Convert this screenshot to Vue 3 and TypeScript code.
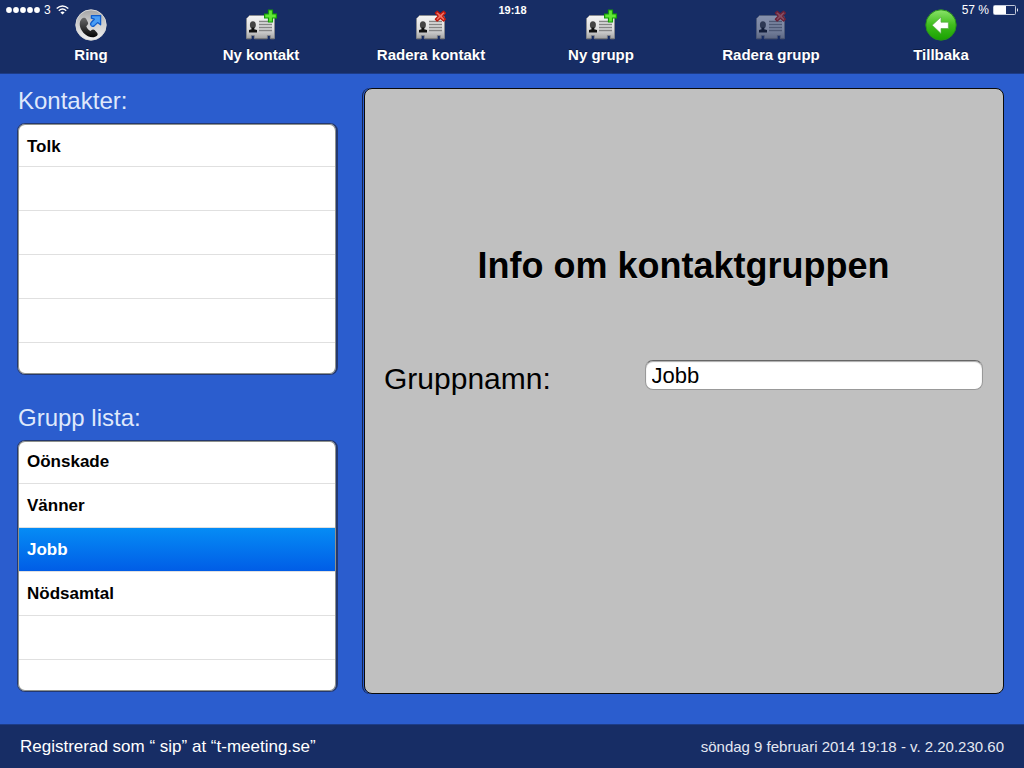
<script setup lang="ts">
import { ref } from 'vue'

type IconKind = 'call' | 'add' | 'remove' | 'back'

interface Action {
  label: string
  icon: IconKind
  disabled?: boolean
}

const actions: Action[] = [
  { label: 'Ring', icon: 'call' },
  { label: 'Ny kontakt', icon: 'add' },
  { label: 'Radera kontakt', icon: 'remove' },
  { label: 'Ny grupp', icon: 'add' },
  { label: 'Radera grupp', icon: 'remove', disabled: true },
  { label: 'Tillbaka', icon: 'back' },
]

const contacts: string[] = ['Tolk', '', '', '', '', '']
const groups: string[] = ['Oönskade', 'Vänner', 'Jobb', 'Nödsamtal', '', '']

const selected = ref('Jobb')
const groupName = ref('Jobb')

function selectGroup(name: string): void {
  selected.value = name
  groupName.value = name
}
</script>

<template>
  <div class="app">
    <svg class="defs" width="0" height="0" aria-hidden="true">
      <defs>
        <linearGradient id="silver" x1="0" y1="0" x2="0" y2="1">
          <stop offset="0" stop-color="#f4f4f4" />
          <stop offset="0.6" stop-color="#dcdcdc" />
          <stop offset="1" stop-color="#a2a2a2" />
        </linearGradient>
        <linearGradient id="ball" x1="0" y1="0" x2="0" y2="1">
          <stop offset="0" stop-color="#a4a4a4" />
          <stop offset="0.4" stop-color="#cacaca" />
          <stop offset="1" stop-color="#f0f0f0" />
        </linearGradient>
        <linearGradient id="handset" x1="0" y1="0" x2="0" y2="1">
          <stop offset="0" stop-color="#6a6a6a" />
          <stop offset="1" stop-color="#050505" />
        </linearGradient>
        <linearGradient id="green" x1="0" y1="0" x2="0" y2="1">
          <stop offset="0" stop-color="#8be36a" />
          <stop offset="0.5" stop-color="#3fbd1c" />
          <stop offset="1" stop-color="#18a000" />
        </linearGradient>
      </defs>
    </svg>

    <header class="topbar">
      <div class="status">
        <div class="status-side">
          <svg width="36" height="8" viewBox="0 0 36 8" fill="#fff" aria-hidden="true">
            <circle v-for="n in 5" :key="n" :cx="n * 7 - 4" cy="4" r="2.9" />
          </svg>
          <span>3</span>
          <svg width="13" height="10" viewBox="0 0 13 10" fill="none" stroke="#fff" stroke-width="1.4" aria-hidden="true">
            <path d="M0.7 3.6Q6.5 -1.8 12.3 3.6M2.8 5.8Q6.5 2.4 10.2 5.8" />
            <path d="M4.4 7.4Q6.5 5.6 8.6 7.4L6.5 9.6Z" fill="#fff" stroke="none" />
          </svg>
        </div>
        <time class="clock">19:18</time>
        <div class="status-side status-right">
          <span>57 %</span>
          <svg width="26" height="10" viewBox="0 0 26 10" aria-hidden="true">
            <rect x="0.5" y="0.5" width="22" height="9" rx="1" fill="none" stroke="#c3cada" />
            <rect x="1" y="1" width="12" height="8" fill="#fff" />
            <path d="M24 3Q26 5 24 7Z" fill="#fff" />
          </svg>
        </div>
      </div>

      <nav class="actions">
        <button v-for="a in actions" :key="a.label" type="button" class="action" :disabled="a.disabled">
          <svg class="icon" viewBox="0 0 32 32" aria-hidden="true">
            <g v-if="a.icon === 'call'">
              <circle cx="16" cy="16" r="15.2" fill="url(#ball)" stroke="#d8d8d8" />
              <path
                d="M7 9.6C3.2 13 4.4 19.6 8.6 23.9C12.8 28.2 19 29.6 22.2 26.4Q23.2 25.3 22.3 24L19.6 21Q18.4 19.9 17 20.8L15.4 21.9C13 20.6 11.9 19 11.3 17.2L12.6 15.8Q13.6 14.6 12.9 13.2L11.2 9.9Q10.3 8.4 8.8 8.7Q7.8 8.9 7 9.6Z"
                fill="url(#handset)"
              />
              <path
                d="M16.4 6.6H25.6V15.8L22.6 13.6L19.2 16.9Q17.6 18 16.2 16.6Q14.8 15 16.2 13.5L19.3 10.2L16.4 9.2Z"
                fill="#4a9ef6"
                stroke="#0f5ccb"
                stroke-width="1.3"
                stroke-linejoin="round"
              />
            </g>
            <g v-else-if="a.icon === 'back'">
              <circle cx="16" cy="16" r="15.2" fill="url(#green)" stroke="#28901b" />
              <path
                d="M7.2 16.2L16 8.1V13.2H23.4V19.5H16V24.5Z"
                fill="#fff"
                stroke="#5aa94a"
                stroke-width="0.7"
                stroke-linejoin="round"
              />
            </g>
            <g v-else>
              <path
                d="M4.5 6.5H27Q29.5 6.5 29.5 9V29.5H25.3V26.5H22.3V29.5H9.3V26.5H6.3V29.5H1.5V9.5Z"
                fill="url(#silver)"
                stroke="#8c8c8c"
                stroke-width="0.8"
              />
              <path d="M1.6 29.8H6.1M9.4 29.8H22.2M25.4 29.8H29.4" stroke="#777" />
              <ellipse cx="7.9" cy="16" rx="3" ry="3.7" fill="#444" />
              <path d="M6.6 18.5H9.2V20.2L12 21V23.4H4V21L6.6 20.2Z" fill="#111" />
              <path d="M14 12.5H27M14 15.5H27M14 18.5H27M14 21.5H27" stroke="#858585" stroke-width="1.3" />
              <path
                v-if="a.icon === 'add'"
                d="M23.5 1H27.5V5H31.4V9H27.5V13H23.5V9H19.6V5H23.5Z"
                fill="#62e636"
                stroke="#159b08"
                stroke-width="1.2"
              />
              <path
                v-else
                d="M22.2 2.2L25.4 5L28.6 2.2L30.4 4L27.6 7.1L30.4 10.2L28.6 12L25.4 9.2L22.2 12L20.4 10.2L23.2 7.1L20.4 4Z"
                fill="#f27262"
                stroke="#bd160c"
                stroke-width="1.3"
                stroke-linejoin="round"
              />
            </g>
          </svg>
          <span>{{ a.label }}</span>
        </button>
      </nav>
    </header>

    <main class="main">
      <div class="lists">
        <section class="section">
          <h2 class="section-title">Kontakter:</h2>
          <ul class="list contacts">
            <li v-for="(name, i) in contacts" :key="i" class="row">
              <button v-if="name" type="button" class="row-button">{{ name }}</button>
            </li>
          </ul>
        </section>
        <section class="section">
          <h2 class="section-title">Grupp lista:</h2>
          <ul class="list">
            <li v-for="(name, i) in groups" :key="i" class="row" :class="{ selected: name === selected }">
              <button v-if="name" type="button" class="row-button" @click="selectGroup(name)">{{ name }}</button>
            </li>
          </ul>
        </section>
      </div>

      <section class="panel">
        <h1 class="panel-title">Info om kontaktgruppen</h1>
        <div class="field">
          <label for="group-name">Gruppnamn:</label>
          <input id="group-name" v-model="groupName" type="text" />
        </div>
      </section>
    </main>

    <footer class="footer">
      <span class="registered">Registrerad som “ sip” at “t-meeting.se”</span>
      <span class="version">söndag 9 februari 2014 19:18 - v. 2.20.230.60</span>
    </footer>
  </div>
</template>

<style>
body {
  background: #2b5dce;
}
</style>

<style scoped>
.app {
  display: flex;
  flex-direction: column;
  min-height: 100vh;
  font-family: "Liberation Sans", Arial, sans-serif;
  color: #000;
  background: #2b5dce;
}

.app *,
.app {
  box-sizing: border-box;
}

.defs {
  position: absolute;
}

button {
  font: inherit;
  color: inherit;
  background: none;
  border: 0;
  padding: 0;
  margin: 0;
}

.topbar {
  position: relative;
  background: #172d65;
  border-bottom: 1px solid #1d3c87;
  color: #fff;
}

.status {
  position: absolute;
  top: 0;
  left: 0;
  right: 0;
  display: flex;
  align-items: center;
  height: 20px;
  padding: 0 5px 0 6px;
  font-size: 12px;
  line-height: 20px;
  pointer-events: none;
}

.status-side {
  display: flex;
  flex: 1;
  align-items: center;
  gap: 2px;
}

.status-side span {
  margin: 0 3px 0 0;
}

.status-right {
  justify-content: flex-end;
  gap: 1px;
}

.clock {
  font-size: 11px;
  font-weight: bold;
}

.actions {
  display: flex;
  justify-content: space-between;
  padding: 9px 13px 9px 21px;
}

.action {
  display: flex;
  flex-direction: column;
  align-items: center;
  gap: 5px;
  width: 140px;
  font-size: 15px;
  font-weight: bold;
  line-height: 18px;
  text-shadow: 0 -1px 0 #0c1b40;
  color: #fff;
}

.icon {
  display: block;
  width: 32px;
  height: 32px;
}

.action:disabled .icon {
  opacity: 0.5;
}

.main {
  flex: 1;
  display: grid;
  grid-template-columns: minmax(0, 321fr) minmax(0, 640fr);
  gap: 26px;
  padding: 14px 20px 30px 17px;
}

.lists {
  display: flex;
  flex-direction: column;
  gap: 30px;
  padding-bottom: 2px;
}

.section {
  flex: 1;
  display: flex;
  flex-direction: column;
}

.section-title {
  margin: 0 0 10px;
  padding-left: 1px;
  font-size: 24px;
  font-weight: normal;
  line-height: 25px;
  color: #dfe8fb;
}

.list {
  flex: 1;
  display: flex;
  flex-direction: column;
  margin: 0;
  padding: 0;
  list-style: none;
  overflow: hidden;
  background: #fff;
  border: 1px solid #24386f;
  border-right-width: 2px;
  border-radius: 8px;
  box-shadow: inset 0 0 0 1px #8f928c;
}

.row {
  height: 44px;
  margin: 0 1px;
  border-bottom: 1px solid #e0e0e0;
  font-size: 17px;
  font-weight: bold;
}

.row:first-child {
  height: 43px;
}

.row:last-child {
  flex: 1;
  border-bottom: 0;
}

.row-button {
  display: block;
  width: 100%;
  height: 100%;
  padding: 0 8px;
  text-align: left;
}

.contacts .row-button {
  padding-top: 4px;
}

.selected {
  color: #fff;
  background: linear-gradient(#058cf5, #015de6);
}

.panel {
  padding: 157px 20px 20px 19px;
  background: #c0c0c0;
  border: 1px solid #0a0a0a;
  border-radius: 8px;
  box-shadow: -1px 0 0 #2b5dce, -2px 0 0 #14234e;
}

.panel-title {
  margin: 0 0 74px;
  font-size: 36px;
  line-height: 40px;
  text-align: center;
  text-shadow: 0 1px 0 #d6d6d6;
}

.field {
  display: grid;
  grid-template-columns: 261fr 339fr;
  align-items: start;
}

.field label {
  font-size: 30px;
  line-height: 38px;
}

.field input {
  width: 100%;
  min-width: 0;
  height: 30px;
  margin: 0;
  padding: 2px 6px 0;
  font: inherit;
  font-size: 22px;
  color: #000;
  background: #fff;
  border: 1px solid #999;
  border-top-color: #666;
  border-radius: 8px;
  box-shadow: inset 0 1px 1px #aaa;
  outline: none;
}

.footer {
  display: flex;
  align-items: center;
  justify-content: space-between;
  height: 44px;
  padding: 0 20px;
  color: #fff;
  background: #172d65;
  border-top: 1px solid #1d3c87;
}

.registered {
  font-size: 17px;
}

.version {
  font-size: 15px;
  color: #e4e8f2;
}
</style>
